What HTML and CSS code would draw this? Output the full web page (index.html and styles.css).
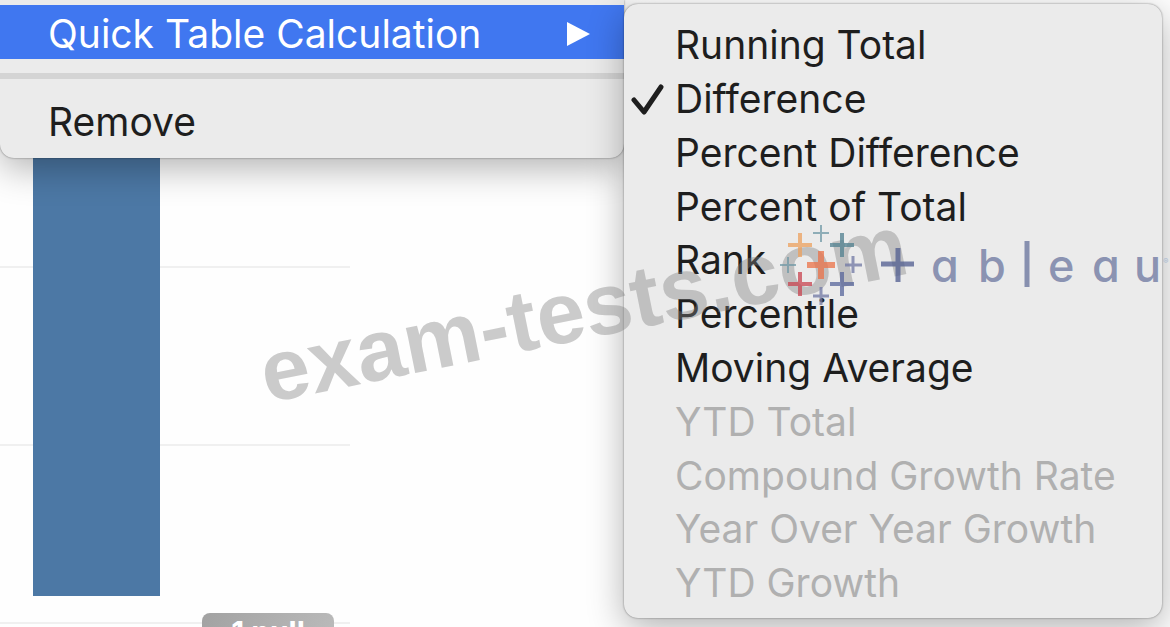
FILE: index.html
```html
<!DOCTYPE html>
<html lang="en">
<head>
    <meta charset="UTF-8">
    <meta name="viewport" content="width=device-width, initial-scale=1.0">
    <title>Quick Table Calculation</title>
    <link rel="stylesheet" href="styles.css">
</head>
<body>

    <main class="page">
        <!-- Chart behind the menus -->
        <div class="chart">
            <div class="band"></div>
            <div class="band"></div>
            <div class="band"></div>
            <div class="bar"></div>
            <div class="tooltip">1 null</div>
        </div>

        <!-- Context menu and its submenu -->
        <div class="menus">
            <div class="menu">
                <button class="item active">
                    Quick Table Calculation
                    <svg class="arrow" width="23" height="24" viewBox="0 0 23 24"><path d="M0 0L23 12L0 24Z" fill="#fff"/></svg>
                </button>
                <hr class="separator">
                <button class="item">Remove</button>
            </div>

            <div class="menu submenu">
                <button class="item">Running Total</button>
                <button class="item">
                    <svg class="check" width="34" height="32" viewBox="0 0 34 32"><path d="M3 17L13 29L30 4" fill="none" stroke="#1e1e1e" stroke-width="5" stroke-linecap="round" stroke-linejoin="round"/></svg>
                    Difference
                </button>
                <button class="item">Percent Difference</button>
                <button class="item">Percent of Total</button>
                <button class="item">Rank</button>
                <button class="item">Percentile</button>
                <button class="item">Moving Average</button>
                <button class="item" disabled>YTD Total</button>
                <button class="item" disabled>Compound Growth Rate</button>
                <button class="item" disabled>Year Over Year Growth</button>
                <button class="item" disabled>YTD Growth</button>
            </div>
        </div>

        <!-- Watermark and logo -->
        <svg class="overlay" viewBox="0 0 1170 627">
            <text class="watermark" transform="translate(267 403) rotate(-11.4)">exam-tests.com</text>
            <g class="logo" fill="none">
                <path d="M807 265h28M821 251v28" stroke="#eb7248" stroke-width="6"/>
                <path d="M788 245h24M800 233v24" stroke="#eda15e" stroke-width="4"/>
                <path d="M813 233h16M821 225v17" stroke="#7099a6" stroke-width="2"/>
                <path d="M830 245h24M842 233v24" stroke="#50808f" stroke-width="4"/>
                <path d="M780 265h16M788 257v16" stroke="#7099a6" stroke-width="2"/>
                <path d="M845 265h17M853 256v17" stroke="#7078a4" stroke-width="3"/>
                <path d="M788 284h24M800 272v24" stroke="#c94450" stroke-width="4"/>
                <path d="M830 284h24M842 272v24" stroke="#58669b" stroke-width="4"/>
                <path d="M813 296h16M821 287v18" stroke="#7078a4" stroke-width="3"/>
                <path d="M881 264h33M898 248v34" stroke="#4f5c8f" stroke-width="5"/>
                <path d="M1027 241v46" stroke="#66719b" stroke-width="5"/>
            </g>
            <text class="wordmark" x="931 978 1048 1092 1134" y="282">abeau</text>
            <text class="registered" x="1163" y="264">®</text>
        </svg>
    </main>

</body>
</html>
```
FILE: styles.css
```css
body {
    margin: 0;
    background-color: #fefefe;
    font-family: Inter, "Liberation Sans", sans-serif;
    overflow: hidden;
}

.page {
    position: relative;
    min-height: 100vh;
    overflow: hidden;
}

/* Chart */
.chart {
    position: relative;
    width: 350px;
    padding-top: 90px;
}

.band {
    height: 176px;
    border-bottom: 2px solid #f0f0f0;
}

.bar {
    position: absolute;
    top: 0;
    left: 33px;
    width: 127px;
    height: 596px;
    background-color: #4c78a5;
}

.tooltip {
    position: absolute;
    top: 613px;
    left: 202px;
    width: 132px;
    height: 40px;
    border-radius: 8px;
    background: linear-gradient(120deg, #a2a2a2, #bcbcbc);
    color: white;
    font-size: 30px;
    font-weight: bold;
    line-height: 38px;
    text-align: center;
}

/* Menus */
.menus {
    position: absolute;
    top: 0;
    left: 0;
    width: 100%;
    display: flex;
    align-items: flex-start;
}

.menu {
    box-sizing: border-box;
    flex: 624;
    padding: 5px 0 10px;
    background-color: #ebebeb;
    border-radius: 0 0 14px 14px;
    box-shadow: 0 0 2px rgba(0, 0, 0, 0.5), 0 10px 36px rgba(0, 0, 0, 0.3);
}

.submenu {
    position: relative;
    flex: 538;
    display: flex;
    flex-direction: column;
    min-height: 98vh;
    margin: 4px 8px 0 0;
    padding: 14px 0 9px;
    border-radius: 14px;
}

.item {
    display: flex;
    align-items: center;
    width: 100%;
    height: 54px;
    padding: 0 34px 0 48px;
    border: none;
    background: none;
    color: #1e1e1e;
    font-family: inherit;
    font-size: 39px;
    text-align: left;
    white-space: nowrap;
}

.submenu .item {
    position: relative;
    flex: 1;
    height: auto;
    padding: 0 0 0 51px;
}

.item.active {
    padding-top: 3px;
    background-color: #4077f0;
    color: white;
}

.item:disabled {
    color: #b0b0b0;
}

.arrow {
    margin-left: auto;
}

.check {
    position: absolute;
    left: 7px;
}

.separator {
    height: 6px;
    margin: 14px 0 15px;
    border: none;
    background-color: #d4d4d4;
}

/* Watermark and logo */
.overlay {
    position: absolute;
    top: 0;
    left: 0;
    width: 100%;
    pointer-events: none;
}

.watermark {
    fill: rgba(128, 128, 128, 0.4);
    font-family: "Liberation Sans", Arial, sans-serif;
    font-size: 87px;
    font-weight: bold;
}

.logo {
    opacity: 0.75;
}

.wordmark {
    fill: #8b93b2;
    font-size: 45px;
    font-weight: 500;
    font-feature-settings: "cv11";
}

.registered {
    fill: #a9b9d0;
    font-size: 8px;
}
```
